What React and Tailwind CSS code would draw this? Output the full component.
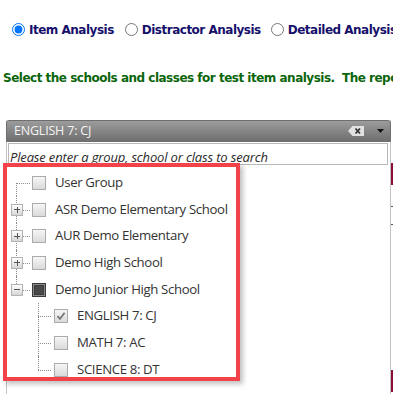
import { useState } from "react";

function Radio({ checked, label, className }) {
  return (
    <label className={"flex items-center " + (className || "")}>
      <input type="radio" name="analysis" defaultChecked={checked} className="m-0 w-[13px] h-[13px]" />
      <span className="ml-[4px] text-[12px] font-bold tracking-[-0.5px] text-[#16106b] whitespace-nowrap">{label}</span>
    </label>
  );
}

function Expander({ open }) {
  return (
    <div className="relative z-10 ml-[4px] w-[12px] h-[12px] border border-[#b3b3b3] bg-gradient-to-b from-[#ffffff] to-[#d6d6d6] flex items-center justify-center">
      <div className="absolute w-[6px] h-[1px] bg-[#555]" />
      {!open && <div className="absolute w-[1px] h-[6px] bg-[#555]" />}
    </div>
  );
}

function Box({ state }) {
  if (state === "partial") {
    return (
      <div className="w-[14px] h-[14px] border border-[#3a3a3a] bg-[#8a8a8a] flex items-center justify-center">
        <div className="w-[10px] h-[10px] bg-[#484848] border border-[#3c3c3c]" />
      </div>
    );
  }
  return (
    <div className="w-[14px] h-[14px] border border-[#ababab] bg-gradient-to-b from-[#f6f6f6] to-[#dadada] flex items-center justify-center">
      {state === "checked" && (
        <svg width="10" height="10" viewBox="0 0 10 10">
          <path d="M1.5 5.2 L4 7.8 L8.6 1.8" fill="none" stroke="#777" strokeWidth="1.8" />
        </svg>
      )}
    </div>
  );
}

const top = [
  { label: "User Group", leaf: true, first: true },
  { label: "ASR Demo Elementary School" },
  { label: "AUR Demo Elementary" },
  { label: "Demo High School" },
  { label: "Demo Junior High School", open: true, last: true, box: "partial" },
];

const kids = [
  { label: "ENGLISH 7: CJ", box: "checked" },
  { label: "MATH 7: AC" },
  { label: "SCIENCE 8: DT", last: true },
];

function TopRow({ item }) {
  return (
    <div className="flex items-center h-[26.7px]">
      <div className="relative w-[20px] h-full flex items-center">
        <div
          className={
            "absolute left-[9px] border-l border-dotted border-[#8c8c8c] " +
            (item.first ? "top-1/2 bottom-0" : item.last ? "top-0 h-1/2" : "top-0 bottom-0")
          }
        />
        <div className="absolute left-[9px] top-1/2 w-[14px] border-t border-dotted border-[#8c8c8c]" />
        {!item.leaf && <Expander open={item.open} />}
      </div>
      <div className="ml-[5px]">
        <Box state={item.box} />
      </div>
      <span className="ml-[9px] whitespace-nowrap">{item.label}</span>
    </div>
  );
}

function KidRow({ item }) {
  return (
    <div className="flex items-center h-[26.7px]">
      <div className="w-[20px]" />
      <div className="relative w-[22px] h-full">
        <div
          className={
            "absolute left-[11px] border-l border-dotted border-[#8c8c8c] " +
            (item.last ? "top-0 h-1/2" : "top-0 bottom-0")
          }
        />
        <div className="absolute left-[11px] top-1/2 w-[13px] border-t border-dotted border-[#8c8c8c]" />
      </div>
      <div className="ml-[5px]">
        <Box state={item.box} />
      </div>
      <span className="ml-[9px] whitespace-nowrap">{item.label}</span>
    </div>
  );
}

export default function App() {
  const [search, setSearch] = useState("");

  return (
    <div className="relative w-[393px] h-[394px] overflow-hidden bg-white font-['DejaVu_Sans',sans-serif]">
      {/* analysis type */}
      <div className="flex items-center mt-[23px] ml-[12px] h-[13px]">
        <Radio checked label="Item Analysis" />
        <Radio label="Distractor Analysis" className="ml-[11px]" />
        <Radio label="Detailed Analysis" className="ml-[10px]" />
      </div>

      <p className="mt-[35px] ml-[3px] text-[12px] leading-[14px] font-bold tracking-[-0.5px] text-[#0b650b] whitespace-nowrap">
        Select the schools and classes for test item analysis.&nbsp; The report will be generated
      </p>

      {/* class picker */}
      <div className="mt-[35px] ml-[6px] w-[385px] h-[280px] border-x border-[#c4c4c4] bg-white font-['Open_Sans',sans-serif]">
        <div className="flex items-center h-[22px] -mx-px px-[7px] rounded-t-[3px] border border-[#6e6e6e] bg-gradient-to-b from-[#9c9c9c] to-[#6f6f6f] text-[12.5px] text-[#f4f4f4]">
          <span className="tracking-[-0.2px]">ENGLISH 7: CJ</span>
          <div className="ml-auto flex items-center">
            <svg width="16" height="10" viewBox="0 0 16 10">
              <path d="M0 5 L4.5 0 H16 V10 H4.5 Z" fill="#e2e2e2" />
              <path d="M7.5 2.5 L12 7.5 M12 2.5 L7.5 7.5" stroke="#333" strokeWidth="1.8" />
            </svg>
            <svg width="7" height="4" viewBox="0 0 7 4" className="ml-[13px] mr-[-1px]">
              <path d="M0 0 H7 L3.5 4 Z" fill="#111" />
            </svg>
          </div>
        </div>
        <div className="mt-px ml-px mr-[2px] h-[22px] border border-[#b8b8b8] bg-white">
          <input
            value={search}
            onChange={(e) => setSearch(e.target.value)}
            placeholder="Please enter a group, school or class to search"
            className="w-full h-full px-[1px] text-[13px] italic tracking-[-0.15px] text-[#222] placeholder:text-[#2a2a2a] outline-none"
          />
        </div>

        <div className="pt-[4.5px] text-[13.2px] tracking-[-0.35px] text-[#333]">
          {top.map((t) => (
            <TopRow key={t.label} item={t} />
          ))}
          {kids.map((k) => (
            <KidRow key={k.label} item={k} />
          ))}
        </div>
      </div>

      {/* page content peeking out from behind the dropdown */}
      <div className="absolute left-[391px] top-[163px] w-[2px] h-[22px] bg-[#8a0f33]" />
      <div className="absolute left-[391px] top-[206px] w-[2px] h-px bg-[#555]" />
      <div className="absolute left-[391px] top-[224px] w-[2px] h-px bg-[#555]" />
      <div className="absolute left-[391px] top-[370px] w-[2px] h-[22px] bg-[#8a0f33]" />

      {/* red highlight annotation */}
      <div className="absolute left-[3px] top-[163px] w-[237px] h-[218px] border-4 border-[#f2434a] shadow-[3px_3px_5px_rgba(0,0,0,0.25)] pointer-events-none" />
    </div>
  );
}
